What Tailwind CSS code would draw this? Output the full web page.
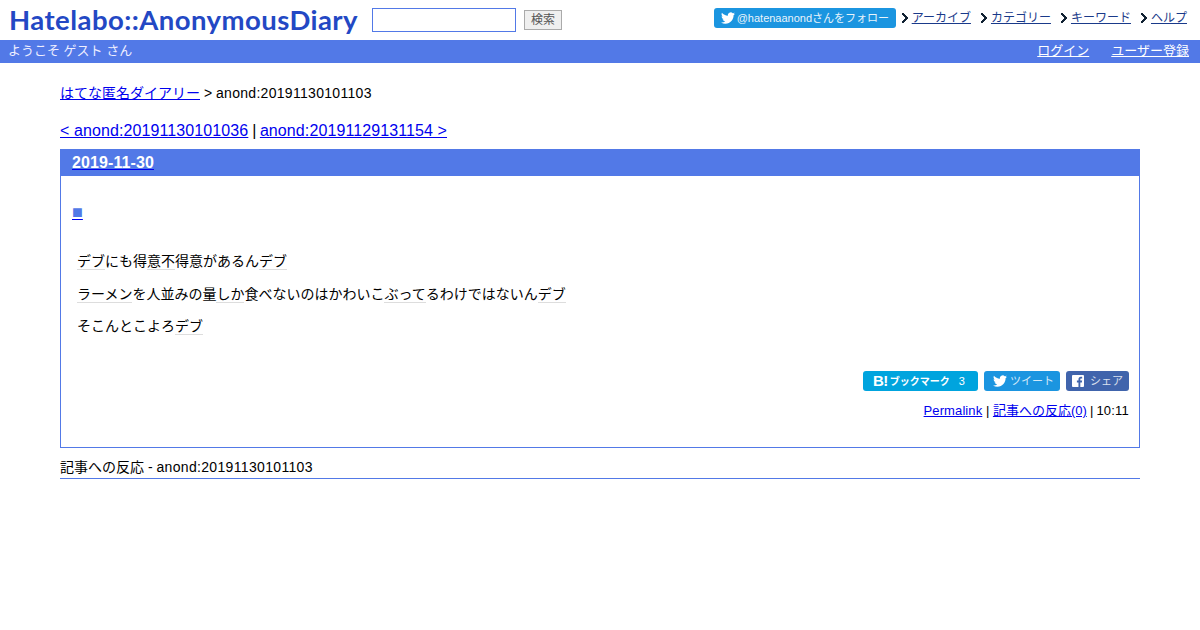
<!DOCTYPE html>
<html lang="en">
<head>
<meta charset="UTF-8">
<title>はてな匿名ダイアリー</title>
<script src="https://cdn.jsdelivr.net/npm/@tailwindcss/browser@4"></script>
</head>
<body class="bg-white text-black text-[14px] font-['Liberation_Sans','Noto_Sans_CJK_JP',sans-serif]">
  <header class="h-10 flex items-start justify-between">
    <div class="flex items-start">
      <a href="#" class="block ml-[9px] mt-[4px] w-[350px] h-[32px] leading-[32px] text-[27.5px] font-bold text-[#2348c4] whitespace-nowrap font-['Lato',sans-serif] tracking-[0.45px]">Hatelabo::AnonymousDiary</a>
      <input type="text" class="ml-[13px] mt-2 w-[144px] h-6 border border-[#5279e7] bg-white">
      <button class="ml-2 mt-[10px] w-[38px] h-5 border border-[#aaa] bg-[#efefef] text-[12px] leading-[18px] text-[#555]">検索</button>
    </div>
    <nav class="flex items-center mt-2 mr-[13px] h-5 text-[12px]">
      <a href="#" class="w-[182px] h-5 flex items-center pl-[7px] rounded-[3px] bg-[#1b95e0] text-white text-[11px] whitespace-nowrap">
        <svg class="w-[14px] h-[14px] mr-[2px]" viewBox="0 0 24 24" fill="#fff"><path d="M23.95 4.57a10 10 0 0 1-2.82.77 4.96 4.96 0 0 0 2.16-2.72c-.95.56-2 .96-3.12 1.19a4.92 4.92 0 0 0-8.38 4.48C7.69 8.1 4.07 6.13 1.64 3.16a4.82 4.82 0 0 0-.67 2.48c0 1.71.87 3.21 2.19 4.1a4.9 4.9 0 0 1-2.23-.61v.06a4.92 4.92 0 0 0 3.95 4.83 4.9 4.9 0 0 1-2.21.08 4.94 4.94 0 0 0 4.6 3.42A9.87 9.87 0 0 1 0 19.54 14 14 0 0 0 7.55 21.7c9.06 0 14-7.5 14-13.98 0-.21 0-.42-.02-.63a9.94 9.94 0 0 0 2.46-2.55z"/></svg>
        <span class="opacity-90">@hatenaanondさんをフォロー</span>
      </a>
      <a href="#" class="ml-[6px] flex items-center text-[#1a3a8a] underline"><svg class="w-[6px] h-[10px] mr-1" viewBox="0 0 6 10"><path d="M0 0h2v1h1v1h1v1h1v1h1v2H5v1H4v1H3v1H2v1H0V8h1V7h1V6h1V4H2V3H1V2H0z" fill="#123"/></svg>アーカイブ</a>
      <a href="#" class="ml-[10px] flex items-center text-[#1a3a8a] underline"><svg class="w-[6px] h-[10px] mr-1" viewBox="0 0 6 10"><path d="M0 0h2v1h1v1h1v1h1v1h1v2H5v1H4v1H3v1H2v1H0V8h1V7h1V6h1V4H2V3H1V2H0z" fill="#123"/></svg>カテゴリー</a>
      <a href="#" class="ml-[10px] flex items-center text-[#1a3a8a] underline"><svg class="w-[6px] h-[10px] mr-1" viewBox="0 0 6 10"><path d="M0 0h2v1h1v1h1v1h1v1h1v2H5v1H4v1H3v1H2v1H0V8h1V7h1V6h1V4H2V3H1V2H0z" fill="#123"/></svg>キーワード</a>
      <a href="#" class="ml-[10px] flex items-center text-[#1a3a8a] underline"><svg class="w-[6px] h-[10px] mr-1" viewBox="0 0 6 10"><path d="M0 0h2v1h1v1h1v1h1v1h1v2H5v1H4v1H3v1H2v1H0V8h1V7h1V6h1V4H2V3H1V2H0z" fill="#123"/></svg>ヘルプ</a>
    </nav>
  </header>

  <div class="h-[23px] bg-[#5279e7] flex items-center justify-between pl-[8px] pr-[11px] pb-[1px] text-[13px] text-[#eef]">
    <span>ようこそ ゲスト さん</span>
    <span class="flex gap-[22px]"><a href="#" class="underline text-white">ログイン</a><a href="#" class="underline text-white">ユーザー登録</a></span>
  </div>

  <main class="mx-[60px]">
    <p class="mt-[22px] h-4 leading-4"><a href="#" class="text-[#0000ee] underline">はてな匿名ダイアリー</a> &gt; <span class="tracking-[0.3px]">anond:20191130101103</span></p>
    <p class="mt-[21px] h-[18px] leading-[18px] text-[16px] tracking-[0.1px]"><a href="#" class="text-[#0000ee] underline">&lt; anond:20191130101036</a><span class="tracking-[-0.5px]"> | </span><a href="#" class="text-[#0000ee] underline">anond:20191129131154 &gt;</a></p>

    <section class="mt-[9px] h-[299px] border border-[#5279e7] flex flex-col">
      <h2 class="h-[26px] -mx-px px-3 bg-[#5279e7] text-white text-[16px] leading-[26px] font-bold"><a href="#" class="underline decoration-[#0000ee] tracking-[0.1px]">2019-11-30</a></h2>
      <div class="pl-[11px] pt-[28px] h-[16px] leading-4 text-[18px]"><a href="#" class="text-[#5279e7] underline decoration-[#0000ee]">■</a></div>
      <div class="ml-4 mt-[49px] flex flex-col gap-[16.5px] leading-4 text-[14px]">
        <p><a class="border-b border-[#ddd]">デブ</a>にも得<a class="border-b border-[#ddd]">意不</a>得意があるん<a class="border-b border-[#ddd]">デブ</a></p>
        <p><a class="border-b border-[#ddd]">ラーメン</a>を人並みの量<a class="border-b border-[#ddd]">しか</a>食べないのはかわいこ<a class="border-b border-[#ddd]">ぶって</a>るわけではないん<a class="border-b border-[#ddd]">デブ</a></p>
        <p>そこんとこよろ<a class="border-b border-[#ddd]">デブ</a></p>
      </div>
      <div class="mt-[37px] mr-[10px] flex justify-end gap-[6px] text-[11px] text-white">
        <a class="w-[115px] h-5 rounded-[3px] bg-[#00a4de] flex items-center pl-[10px] font-bold whitespace-nowrap text-[10px]"><span class="text-[15px] mr-[2px] tracking-[-0.5px]">B!</span>ブックマーク<span class="ml-[9px] font-normal text-[11px]">3</span></a>
        <a class="w-[76px] h-5 rounded-[3px] bg-[#1b95e0] flex items-center pl-[9px]">
          <svg class="w-[14px] h-[14px] mr-[3px]" viewBox="0 0 24 24" fill="#fff"><path d="M23.95 4.57a10 10 0 0 1-2.82.77 4.96 4.96 0 0 0 2.16-2.72c-.95.56-2 .96-3.12 1.19a4.92 4.92 0 0 0-8.38 4.48C7.69 8.1 4.07 6.13 1.64 3.16a4.82 4.82 0 0 0-.67 2.48c0 1.71.87 3.21 2.19 4.1a4.9 4.9 0 0 1-2.23-.61v.06a4.92 4.92 0 0 0 3.95 4.83 4.9 4.9 0 0 1-2.21.08 4.94 4.94 0 0 0 4.6 3.42A9.87 9.87 0 0 1 0 19.54 14 14 0 0 0 7.55 21.7c9.06 0 14-7.5 14-13.98 0-.21 0-.42-.02-.63a9.94 9.94 0 0 0 2.46-2.55z"/></svg>
          <span class="opacity-80">ツイート</span></a>
        <a class="w-[63px] h-5 rounded-[3px] bg-[#4064ac] flex items-center pl-[6px]">
          <svg class="w-[12px] h-[12px] mr-[6px]" viewBox="0 0 13 13"><rect width="13" height="13" rx="1" fill="#fff"/><path d="M9 13V8h1.700l.3-2H9V4.800c0-.6.2-1 1-1h1V2.100C10.800 2 10.200 2 9.600 2 8 2 7 3 7 4.600V6H5.300v2H7v5z" fill="#4064ac"/></svg>
          <span class="opacity-80">シェア</span></a>
      </div>
      <p class="mt-[12px] mr-[10px] text-right text-[13px] leading-4"><a href="#" class="text-[#0000ee] underline tracking-[0.1px]">Permalink</a> | <a href="#" class="text-[#0000ee] underline">記事への反応(0)</a><span class="tracking-[-0.33px]"> | </span><span class="tracking-[0.2px]">10:11</span></p>
    </section>

    <h3 class="mt-[11px] h-[20px] leading-[17px] border-b border-[#5279e7]">記事への反応 - <span class="tracking-[0.33px]">anond:20191130101103</span></h3>
  </main>
</body>
</html>
